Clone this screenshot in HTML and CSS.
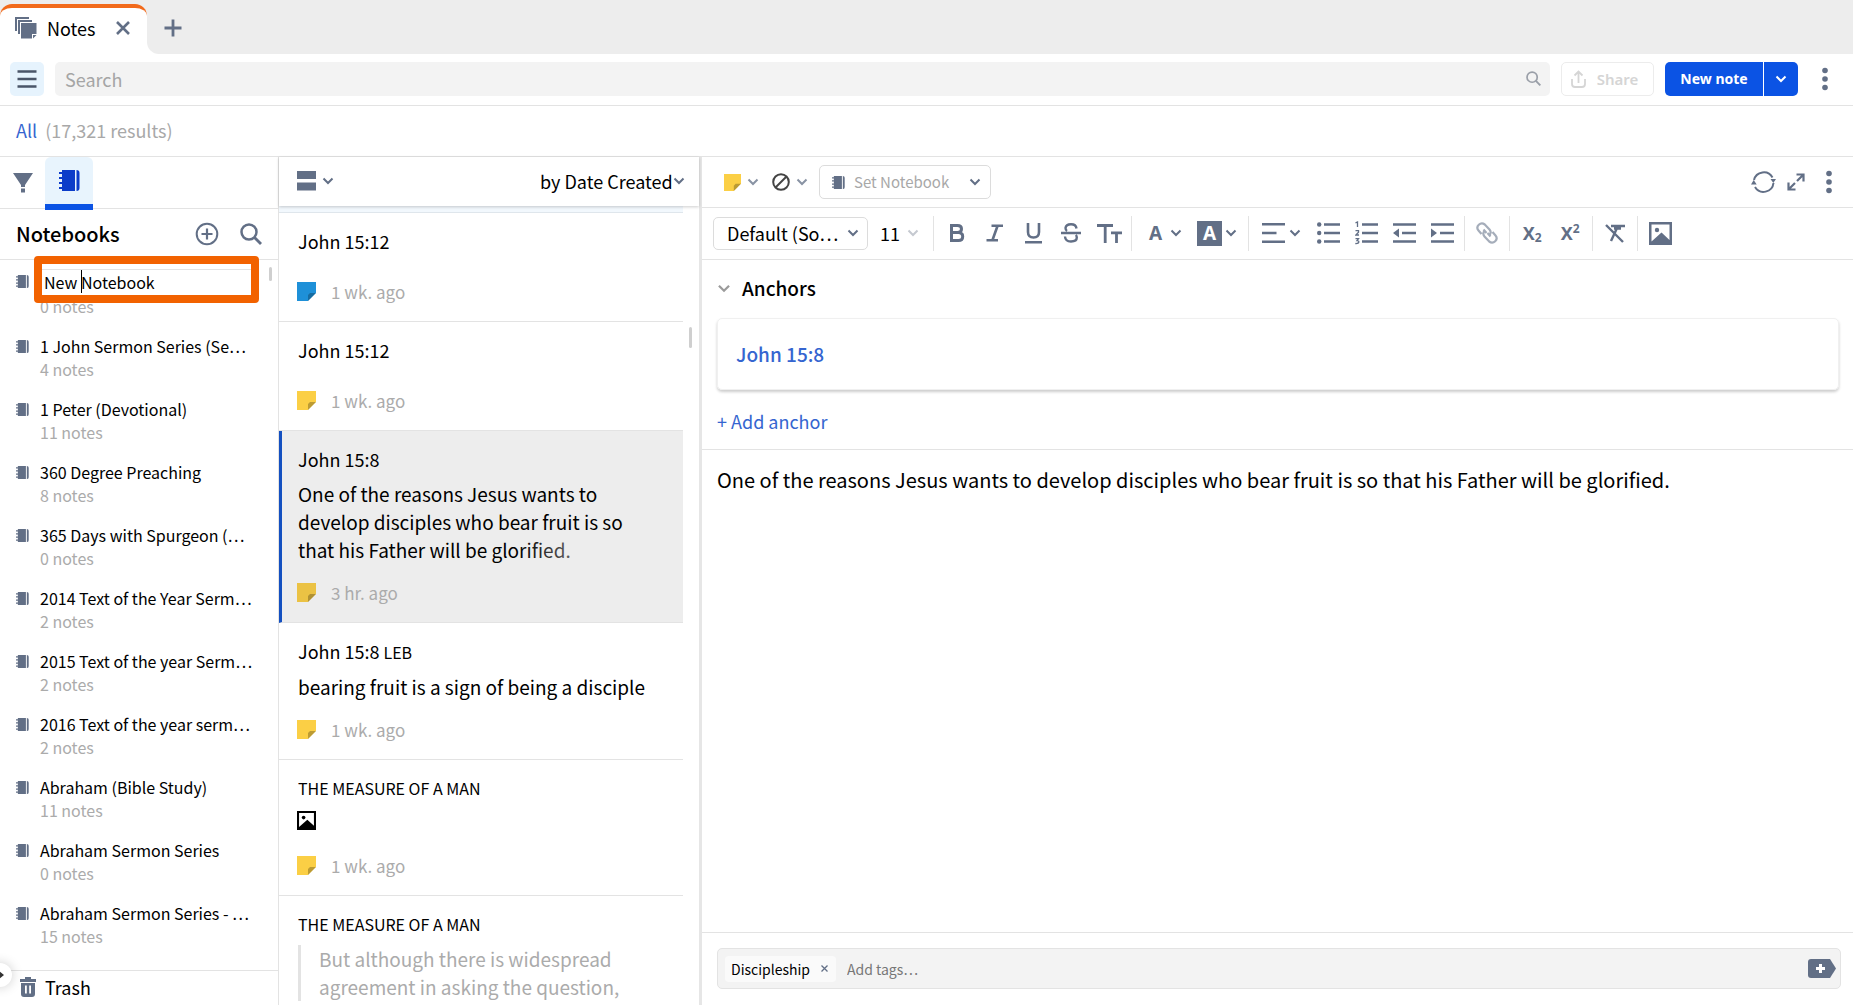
FILE: index.html
```html
<!DOCTYPE html>
<html lang="en">
<head>
    <meta charset="UTF-8">
    <meta name="viewport" content="width=device-width, initial-scale=1.0">
    <title>Notes</title>
    <link rel="stylesheet" href="styles.css">
</head>
<body>

    <!-- Icon set -->
    <svg class="sprite" aria-hidden="true">
        <symbol id="i-chevron" viewBox="0 0 12 8"><path d="M1.5 1.500 6 6l4.500-4.500" fill="none" stroke="currentColor" stroke-width="2"/></symbol>
        <symbol id="i-book" viewBox="0 0 21 23"><path d="M3 1h13v21H3v-2H0v-2h3v-3H0v-2h3v-3H0V8h3V5H0V3h3zM17.500 1q3 0 3 3v15q0 3-3 3z" fill="currentColor"/></symbol>
        <symbol id="i-sticky" viewBox="0 0 19 19"><path d="M0 0h19v11l-8 8H0z" fill="currentColor"/><path d="M11 19v-6l2-2h6z" fill="#000" fill-opacity=".25"/></symbol>
        <symbol id="i-search" viewBox="0 0 22 22"><circle cx="9" cy="9" r="7.500" fill="none" stroke="currentColor" stroke-width="2.500"/><path d="m14.500 14.500 6.500 6.500" stroke="currentColor" stroke-width="2.800"/></symbol>
        <symbol id="i-dots" viewBox="0 0 6 24"><circle cx="3" cy="3.500" r="2.800" fill="currentColor"/><circle cx="3" cy="12" r="2.800" fill="currentColor"/><circle cx="3" cy="20.500" r="2.800" fill="currentColor"/></symbol>
        <symbol id="i-picture" viewBox="0 0 23 23"><path d="M0 0h23v23H0zM2.500 2.500v17l10-9 8 7.500V2.500z" fill="currentColor" fill-rule="evenodd"/><circle cx="8" cy="8" r="2.200" fill="currentColor"/></symbol>
    </svg>

    <div class="tabbar">
        <div class="tab-slot">
            <div class="tab">
                <svg class="tab-icon" width="22" height="22" viewBox="0 0 22 22"><path d="M0 0h14v2H2v12H0zM3 3h14v2H5v12H3zM6 6h15.500v11h-4.500v4.500H6zM18 18h3.500L18 21.500z" fill="currentColor"/></svg>
                <span class="tab-title">Notes</span>
                <button class="tab-close" aria-label="Close tab"><svg width="14" height="14" viewBox="0 0 14 14"><path d="m1 1 12 12M13 1 1 13" stroke="currentColor" stroke-width="2.600"/></svg></button>
            </div>
        </div>
        <div class="tab-rest">
            <button aria-label="New tab"><svg width="18" height="18" viewBox="0 0 18 18"><path d="M9 .5v17M.5 9h17" stroke="currentColor" stroke-width="2.800"/></svg></button>
        </div>
    </div>

    <header class="topbar">
        <button class="menu-btn" aria-label="Menu"><svg width="20" height="18" viewBox="0 0 20 18"><path d="M.5 1.500h19M.5 9h19M.5 16.500h19" stroke="currentColor" stroke-width="2.600"/></svg></button>
        <label class="search">
            <input type="search" placeholder="Search" aria-label="Search">
            <svg width="15" height="15"><use href="#i-search"/></svg>
        </label>
        <button class="share-btn" disabled>
            <svg width="15" height="18" viewBox="0 0 15 18"><path d="M1 9v5q0 3 3 3h7q3 0 3-3V9M7.500 13V2M3.500 5.500l4-4 4 4" fill="none" stroke="currentColor" stroke-width="1.800"/></svg>
            Share
        </button>
        <div class="new-note">
            <button class="new-main">New note</button>
            <button class="new-more" aria-label="More note types"><svg width="12" height="8"><use href="#i-chevron"/></svg></button>
        </div>
        <button class="topbar-more" aria-label="More"><svg width="6" height="24"><use href="#i-dots"/></svg></button>
    </header>

    <div class="crumbs">
        <a href="#">All</a>
        <span>(17,321 results)</span>
    </div>

    <main class="panels">

        <aside class="sidebar">
            <div class="side-tabs">
                <button class="side-tab" aria-label="Filters"><svg width="20" height="20" viewBox="0 0 20 20"><path d="M0 0h20l-8 12v2H8v-2zM8 15.500h4v4H8z" fill="currentColor"/></svg></button>
                <button class="side-tab active" aria-label="Notebooks"><svg width="21" height="23"><use href="#i-book"/></svg></button>
            </div>
            <div class="side-head">
                <h2>Notebooks</h2>
                <button aria-label="Add notebook"><svg width="24" height="24" viewBox="0 0 24 24"><circle cx="12" cy="12" r="10.300" fill="none" stroke="currentColor" stroke-width="2"/><path d="M12 6.500v11M6.500 12h11" stroke="currentColor" stroke-width="2.200"/></svg></button>
                <button aria-label="Find notebook"><svg width="22" height="22"><use href="#i-search"/></svg></button>
            </div>
            <div class="scroll-thumb side-thumb"></div>
            <ul class="notebooks">
                <li class="editing">
                    <svg width="13" height="15"><use href="#i-book"/></svg>
                    <div class="nb-edit">
                        <input type="text" value="New Notebook" aria-label="Notebook name">
                        <i class="caret"></i>
                    </div>
                    <small>0 notes</small>
                </li>
                <li><svg width="13" height="15"><use href="#i-book"/></svg><span>1 John Sermon Series (Se…</span><small>4 notes</small></li>
                <li><svg width="13" height="15"><use href="#i-book"/></svg><span>1 Peter (Devotional)</span><small>11 notes</small></li>
                <li><svg width="13" height="15"><use href="#i-book"/></svg><span>360 Degree Preaching</span><small>8 notes</small></li>
                <li><svg width="13" height="15"><use href="#i-book"/></svg><span>365 Days with Spurgeon (…</span><small>0 notes</small></li>
                <li><svg width="13" height="15"><use href="#i-book"/></svg><span>2014 Text of the Year Serm…</span><small>2 notes</small></li>
                <li><svg width="13" height="15"><use href="#i-book"/></svg><span>2015 Text of the year Serm…</span><small>2 notes</small></li>
                <li><svg width="13" height="15"><use href="#i-book"/></svg><span>2016 Text of the year serm…</span><small>2 notes</small></li>
                <li><svg width="13" height="15"><use href="#i-book"/></svg><span>Abraham (Bible Study)</span><small>11 notes</small></li>
                <li><svg width="13" height="15"><use href="#i-book"/></svg><span>Abraham Sermon Series</span><small>0 notes</small></li>
                <li><svg width="13" height="15"><use href="#i-book"/></svg><span>Abraham Sermon Series - …</span><small>15 notes</small></li>
                <li><svg width="13" height="15"><use href="#i-book"/></svg><span>Advanced Building</span></li>
            </ul>
            <a class="trash" href="#">
                <svg width="16" height="20" viewBox="0 0 16 20"><path d="M0 2h5V0h6v2h5v3H0zM1 6h14v11q0 3-3 3H4q-3 0-3-3zM5 8.500v8h1.800v-8zM9.200 8.500v8H11v-8z" fill="currentColor" fill-rule="evenodd"/></svg>
                Trash
            </a>
            <button class="expander" aria-label="Expand"><svg width="8" height="8" viewBox="0 0 8 8"><path d="M0 3h3V0l5 4-5 4V5H0z" fill="currentColor"/></svg></button>
        </aside>

        <section class="note-list">
            <div class="list-head">
                <button class="layout-btn" aria-label="Layout">
                    <svg width="19" height="20" viewBox="0 0 19 20"><path d="M0 0h19v8H0zM0 11.500h19v8H0z" fill="currentColor"/></svg>
                    <svg width="12" height="8"><use href="#i-chevron"/></svg>
                </button>
                <label class="sort">
                    <select aria-label="Sort"><option>by Date Created</option></select>
                    <svg width="12" height="8"><use href="#i-chevron"/></svg>
                </label>
            </div>
            <div class="scroll-thumb list-thumb"></div>
            <div class="notes">
                <div class="prev-note"></div>
                <article class="note">
                    <h3>John 15:12</h3>
                    <div class="note-body"></div>
                    <footer><svg class="blue" width="19" height="19"><use href="#i-sticky"/></svg>1 wk. ago</footer>
                </article>
                <article class="note">
                    <h3>John 15:12</h3>
                    <div class="note-body"></div>
                    <footer><svg width="19" height="19"><use href="#i-sticky"/></svg>1 wk. ago</footer>
                </article>
                <article class="note selected">
                    <h3>John 15:8</h3>
                    <div class="note-body fade">One of the reasons Jesus wants to develop disciples who bear fruit is so that his Father will be glorified.</div>
                    <footer><svg width="19" height="19"><use href="#i-sticky"/></svg>3 hr. ago</footer>
                </article>
                <article class="note">
                    <h3>John 15:8 <span class="version">LEB</span></h3>
                    <div class="note-body">bearing fruit is a sign of being a disciple</div>
                    <footer><svg width="19" height="19"><use href="#i-sticky"/></svg>1 wk. ago</footer>
                </article>
                <article class="note">
                    <h3 class="book-title">THE MEASURE OF A MAN</h3>
                    <div class="note-body"><svg class="thumb" width="19" height="19"><use href="#i-picture"/></svg></div>
                    <footer><svg width="19" height="19"><use href="#i-sticky"/></svg>1 wk. ago</footer>
                </article>
                <article class="note">
                    <h3 class="book-title">THE MEASURE OF A MAN</h3>
                    <blockquote>But although there is widespread agreement in asking the question,</blockquote>
                </article>
            </div>
        </section>

        <section class="editor">
            <div class="editor-head">
                <button class="drop" aria-label="Note style"><svg class="yellow" width="17" height="17"><use href="#i-sticky"/></svg><svg class="chev" width="12" height="8"><use href="#i-chevron"/></svg></button>
                <button class="drop" aria-label="Highlight"><svg class="none" width="18" height="18" viewBox="0 0 18 18"><circle cx="9" cy="9" r="7.800" fill="none" stroke="currentColor" stroke-width="2"/><path d="M3.500 14.500 14.500 3.500" stroke="currentColor" stroke-width="2"/></svg><svg class="chev" width="12" height="8"><use href="#i-chevron"/></svg></button>
                <label class="set-notebook">
                    <svg width="13" height="15"><use href="#i-book"/></svg>
                    <select aria-label="Notebook"><option>Set Notebook</option></select>
                    <svg width="12" height="8"><use href="#i-chevron"/></svg>
                </label>
                <div class="head-actions">
                    <button aria-label="Sync"><svg width="25" height="24" viewBox="0 0 25 24"><path d="M3 10a10 10 0 0 1 18.500-2.500M22.500 13A10 10 0 0 1 4 17" fill="none" stroke="currentColor" stroke-width="2"/><path d="M19.500 9h5.500l-2.700 4zM0 14.500l2.700-4.500 3 4.500z" fill="currentColor"/></svg></button>
                    <button aria-label="Full screen"><svg width="18" height="18" viewBox="0 0 18 18"><path d="M9.500 1.500h7v7M16 2l-6 6M1.500 9.500v7h7M2 16l6-6" fill="none" stroke="currentColor" stroke-width="2.200"/></svg></button>
                    <button class="head-more" aria-label="More"><svg width="6" height="24"><use href="#i-dots"/></svg></button>
                </div>
            </div>

            <div class="toolbar">
                <label class="font-select">
                    <select aria-label="Font"><option>Default (So…</option></select>
                    <svg width="12" height="8"><use href="#i-chevron"/></svg>
                </label>
                <label class="size-select">
                    <select aria-label="Size"><option>11</option></select>
                    <svg width="12" height="8"><use href="#i-chevron"/></svg>
                </label>
                <div class="tools wide">
                    <button aria-label="Bold"><svg width="16" height="18" viewBox="0 0 16 18"><path d="M2.500 1.500h6q4 0 4 3.500t-4 3.500h-6zM2.500 8.500h7q4.200 0 4.200 4t-4.200 4h-7z" fill="none" stroke="currentColor" stroke-width="3"/></svg></button>
                    <button aria-label="Italic"><svg width="18" height="18" viewBox="0 0 18 18"><path d="M5.500 1.800h11.500M.5 16.200H12M11.500 2l-5 14" fill="none" stroke="currentColor" stroke-width="2.600"/></svg></button>
                    <button aria-label="Underline"><svg width="17" height="21" viewBox="0 0 17 21"><path d="M3 0v9q0 5.500 5.500 5.500T14 9V0M0 19.300h17" fill="none" stroke="currentColor" stroke-width="2.600"/></svg></button>
                    <button aria-label="Strikethrough"><svg width="20" height="20" viewBox="0 0 20 20"><path d="M15.500 5.500Q15 1.300 10 1.300T4.500 5q0 2 1.500 3M0 10h20M4 13.500q.3 5 6 5 5.800 0 5.800-4 0-1.500-1-2.500" fill="none" stroke="currentColor" stroke-width="2.400"/></svg></button>
                    <button aria-label="Text case"><svg width="25" height="19" viewBox="0 0 25 19"><path d="M0 1.500h16M8.200 1v18M14 8.800h11M19.500 8v11" fill="none" stroke="currentColor" stroke-width="2.800"/></svg></button>
                </div>
                <div class="tools color-tools">
                    <button class="letter" aria-label="Text color">A<svg width="12" height="8"><use href="#i-chevron"/></svg></button>
                    <button class="letter" aria-label="Background color"><span>A</span><svg width="12" height="8"><use href="#i-chevron"/></svg></button>
                </div>
                <div class="tools wide">
                    <button class="align" aria-label="Align"><svg width="23" height="20" viewBox="0 0 23 20"><path d="M0 1.300h23M0 10h14.500M0 18.700h23" stroke="currentColor" stroke-width="2.500"/></svg><svg width="12" height="8"><use href="#i-chevron"/></svg></button>
                    <button aria-label="Bulleted list"><svg width="23" height="22" viewBox="0 0 23 22"><path d="M7 2.500h16M7 11h16M7 19.500h16" stroke="currentColor" stroke-width="2.500"/><circle cx="2.200" cy="2.500" r="2.200" fill="currentColor"/><circle cx="2.200" cy="11" r="2.200" fill="currentColor"/><circle cx="2.200" cy="19.500" r="2.200" fill="currentColor"/></svg></button>
                    <button aria-label="Numbered list"><svg width="23" height="24" viewBox="0 0 23 24"><path d="M7 3.500h16M7 12h16M7 20.500h16" stroke="currentColor" stroke-width="2.500"/><path d="M.5 1.800 2.500 1v5M.5 9.700h3v1.500L.8 14h3.200M.5 17.700h3L2 19.700q2 0 1.800 1.500T.3 22.500" fill="none" stroke="currentColor" stroke-width="1.300"/></svg></button>
                    <button aria-label="Outdent"><svg width="23" height="22" viewBox="0 0 23 22"><path d="M0 2.500h23M9 11h14M0 19.500h23" stroke="currentColor" stroke-width="2.500"/><path d="M6 6.500v9L0 11z" fill="currentColor"/></svg></button>
                    <button aria-label="Indent"><svg width="23" height="22" viewBox="0 0 23 22"><path d="M0 2.500h23M9 11h14M0 19.500h23" stroke="currentColor" stroke-width="2.500"/><path d="M0 6.500v9l6-4.500z" fill="currentColor"/></svg></button>
                </div>
                <div class="tools">
                    <button class="muted" aria-label="Link"><svg width="22" height="22" viewBox="0 0 22 22"><g fill="none" stroke="currentColor" stroke-width="2.200"><path d="M5.500 12 2.500 8.500Q0 5.500 2.800 2.800t6-.3L13.500 7.500q2 2.500.5 5M16.500 10l3 3.500q2.500 3-.3 5.700t-6 .3L8.500 14.500q-2-2.500-.5-5M7.500 7.500l3 3.500M11.500 11l3 3.500"/></g></svg></button>
                </div>
                <div class="tools">
                    <button class="script" aria-label="Subscript">X<sub>2</sub></button>
                    <button class="script" aria-label="Superscript">X<sup>2</sup></button>
                </div>
                <div class="tools">
                    <button aria-label="Clear formatting"><svg width="20" height="19" viewBox="0 0 20 19"><path d="M6 2h14M13 2 6 17M1 1l17 17M9 4.500h7" fill="none" stroke="currentColor" stroke-width="2.400"/></svg></button>
                </div>
                <div class="tools">
                    <button aria-label="Insert picture"><svg width="23" height="23"><use href="#i-picture"/></svg></button>
                </div>
            </div>

            <div class="anchors">
                <h2><svg width="14" height="9"><use href="#i-chevron"/></svg>Anchors</h2>
                <div class="anchor-card"><a href="#">John 15:8</a></div>
                <a class="add-anchor" href="#">+ Add anchor</a>
            </div>

            <div class="content" contenteditable="true" spellcheck="false">One of the reasons Jesus wants to develop disciples who bear fruit is so that his Father will be glorified.</div>

            <div class="tags">
                <div class="tag-box">
                    <span class="chip">Discipleship<button aria-label="Remove tag"><svg width="7" height="7" viewBox="0 0 7 7"><path d="m.5.5 6 6M6.500.5l-6 6" stroke="currentColor" stroke-width="1.300"/></svg></button></span>
                    <input type="text" placeholder="Add tags…" aria-label="Add tags">
                    <button class="tag-add" aria-label="Add tag"><svg width="28" height="19" viewBox="0 0 28 19"><path d="M3 0h19l6 9.500-6 9.500H3q-3 0-3-3V3q0-3 3-3z" fill="currentColor"/><path d="M12.500 5v9M8 9.500h9" stroke="#fff" stroke-width="3"/></svg></button>
                </div>
            </div>
        </section>

    </main>

</body>
</html>
```

FILE: styles.css
```css
* {
    box-sizing: border-box;
}

body {
    margin: 0;
    height: 100vh;
    display: flex;
    flex-direction: column;
    overflow: hidden;
    font-family: "Noto Sans CJK KR", "Noto Sans CJK SC", sans-serif;
    font-size: 18px;
    line-height: 24px;
    color: #000;
    background: #fff;
}

h2, h3, ul, blockquote {
    margin: 0;
    padding: 0;
    font-weight: 400;
}

a {
    color: #3565d0;
    text-decoration: none;
}

svg {
    display: block;
    flex: none;
}

.sprite {
    position: absolute;
    width: 0;
    height: 0;
}

button, input, select {
    margin: 0;
    padding: 0;
    border: 0;
    background: none;
    font: inherit;
    color: inherit;
    outline: none;
}

button {
    display: flex;
    align-items: center;
    justify-content: center;
    flex: none;
    color: #626f86;
}

select {
    appearance: none;
}

/* Tab bar */
.tabbar {
    display: flex;
    height: 54px;
    flex: none;
}

.tab-slot {
    width: 147px;
    padding-top: 4px;
    background: #ededed;
}

.tab {
    display: flex;
    align-items: center;
    height: 50px;
    padding: 0 17px 6px 15px;
    border-top: 4px solid #f26a1b;
    border-radius: 12px 12px 0 0;
    background: #fff;
    color: #626f86;
}

.tab-title {
    flex: 1;
    padding-left: 10px;
    color: #000;
}

.tab-rest {
    flex: 1;
    display: flex;
    padding: 2px 17px 0;
    border-radius: 0 0 0 12px;
    background: #ededed;
}

/* Top bar */
.topbar {
    display: flex;
    align-items: center;
    gap: 11px;
    height: 52px;
    flex: none;
    padding: 0 0 2px 10px;
    border-bottom: 1px solid #e3e3e3;
}

.menu-btn {
    width: 34px;
    height: 34px;
    border-radius: 5px;
    background: #e6f3fd;
    color: #4a5568;
}

.search {
    flex: 1;
    display: flex;
    align-items: center;
    height: 34px;
    padding: 0 9px 0 10px;
    border-radius: 5px;
    background: #f3f3f3;
    color: #9a9fa8;
}

.search input {
    flex: 1;
}

.search input::placeholder {
    color: #a5a5a5;
}

.share-btn {
    width: 93px;
    height: 34px;
    gap: 11px;
    padding-right: 6px;
    border: 1px solid #ececec;
    border-radius: 5px;
    color: #d5d5d5;
    font-family: "Noto Sans", sans-serif;
    font-size: 15px;
    font-weight: 600;
}

.new-note {
    display: flex;
    gap: 1px;
}

.new-main, .new-more {
    height: 34px;
    background: #0b53e4;
    color: #fff;
}

.new-main {
    width: 98px;
    border-radius: 5px 0 0 5px;
    font-family: "Noto Sans", sans-serif;
    font-size: 14px;
    font-weight: 700;
}

.new-more {
    width: 34px;
    border-radius: 0 5px 5px 0;
}

.topbar-more {
    width: 55px;
    height: 34px;
    margin-left: -11px;
    padding-right: 2px;
}

.crumbs {
    display: flex;
    align-items: center;
    gap: 8px;
    height: 51px;
    flex: none;
    padding: 0 0 2px 16px;
    border-bottom: 1px solid #e3e3e3;
    color: #a8a8a8;
}

/* Panels */
.panels {
    flex: 1;
    display: flex;
    min-height: 0;
}

.sidebar {
    position: relative;
    display: flex;
    flex-direction: column;
    width: 279px;
    flex: none;
    border-right: 1px solid #e3e3e3;
}

.side-tabs {
    display: flex;
    height: 52px;
    flex: none;
    border-bottom: 1px solid #e3e3e3;
}

.side-tab {
    width: 45px;
}

.side-tab.active {
    width: 48px;
    height: 53px;
    border-bottom: 6px solid #0b53e4;
    border-radius: 6px 6px 0 0;
    background: #e8f4fd;
    color: #0b3cc9;
}

.side-head {
    display: flex;
    align-items: center;
    gap: 21px;
    height: 51px;
    flex: none;
    padding: 0 16px;
    border-bottom: 1px solid #e3e3e3;
}

.side-head h2 {
    flex: 1;
    font-size: 20px;
    font-weight: 500;
}

.scroll-thumb {
    position: absolute;
    width: 3px;
    border-radius: 2px;
    background: #cfcfcf;
}

.side-thumb {
    top: 110px;
    right: 6px;
    height: 14px;
}

.list-thumb {
    top: 170px;
    right: 7px;
    height: 21px;
}

.notebooks {
    flex: 1;
    min-height: 0;
    overflow: hidden;
    list-style: none;
    margin-top: -10px;
    padding: 19px 20px 0 16px;
    font-size: 16px;
}

.notebooks li {
    position: relative;
    display: grid;
    grid-template-columns: 13px 1fr;
    grid-template-rows: 24px 22px;
    column-gap: 11px;
    margin-bottom: 17px;
}

.notebooks li > svg {
    margin-top: 5px;
    color: #626f86;
}

.notebooks span {
    white-space: nowrap;
}

.notebooks small {
    grid-column: 2;
    font-size: 16px;
    line-height: 22px;
    color: #ababab;
}

.notebooks .editing {
    row-gap: 2px;
}

/* Rename box covers part of the row below it */
.nb-edit {
    position: absolute;
    top: -13px;
    left: 18px;
    right: -1px;
    height: 47px;
    padding-top: 5px;
    border: 8px solid #f26200;
    border-radius: 4px;
    background: #fff;
}

.nb-edit input {
    display: block;
    width: 100%;
    height: 25px;
    padding-left: 2px;
    border-top: 1px solid #e3e3e3;
}

.editing small {
    grid-row: 2;
}

.caret {
    position: absolute;
    top: 6px;
    left: 39px;
    width: 1px;
    height: 23px;
    background: #000;
}

.trash {
    display: flex;
    align-items: center;
    gap: 9px;
    height: 35px;
    flex: none;
    padding: 0 0 2px 20px;
    border-top: 1px solid #e3e3e3;
    color: #000;
}

.trash svg {
    color: #626f86;
}

.expander {
    position: absolute;
    bottom: 18px;
    left: -12px;
    width: 24px;
    height: 24px;
    border-radius: 50%;
    background: #fff;
    box-shadow: 0 0 12px rgba(0, 0, 0, .2);
    color: #333;
}

/* Note list */
.note-list {
    position: relative;
    display: flex;
    flex-direction: column;
    width: 423px;
    flex: none;
    border-right: 3px solid #e6e6e6;
}

.list-head {
    display: flex;
    align-items: center;
    justify-content: space-between;
    height: 49px;
    flex: none;
    padding: 0 14px 2px 18px;
    box-shadow: 0 1px 3px rgba(0, 0, 0, .2);
    z-index: 1;
}

.layout-btn {
    gap: 6px;
}

.sort {
    display: flex;
    align-items: center;
    color: #626f86;
}

.sort select {
    color: #000;
}

.notes {
    flex: 1;
    min-height: 0;
    overflow: hidden;
    padding-right: 16px;
}

.prev-note {
    height: 7px;
    border-bottom: 1px solid #dfe6ec;
    background: #f2f8fd;
}

.note {
    padding: 16px 28px 20px 19px;
    border-bottom: 1px solid #e3e3e3;
}

.note.selected {
    padding-left: 16px;
    border-left: 3px solid #1450c0;
    background: #ededed;
}

.note h3 {
    font-size: 18px;
}

.note .version {
    font-size: 16px;
}

.note h3.book-title {
    font-size: 16px;
}

.note-body {
    position: relative;
    min-height: 1px;
    margin: 9px 0 19px;
    font-size: 19px;
    line-height: 28px;
}

.note-body.fade::after {
    content: "";
    position: absolute;
    right: 0;
    bottom: 0;
    width: 138px;
    height: 28px;
    background: linear-gradient(to right, rgba(237, 237, 237, 0), #ededed);
}

.note-body:has(.thumb) {
    height: 28px;
}

.note-body .thumb {
    margin-left: -1px;
    padding-top: 2px;
    height: 21px;
}

.note footer {
    display: flex;
    align-items: center;
    gap: 15px;
    height: 19px;
    font-size: 17px;
    color: #ababab;
}

.note footer svg {
    color: #fbcf45;
    margin-left: -1px;
}

.note footer svg.blue {
    color: #1e90d8;
}

.note.selected footer svg {
    color: #ebc244;
}

.note blockquote {
    margin-top: 9px;
    padding-left: 18px;
    border-left: 3px solid #e3e3e3;
    font-size: 19px;
    line-height: 28px;
    color: #ababab;
}

/* Editor */
.editor {
    flex: 1;
    display: flex;
    flex-direction: column;
    min-width: 0;
}

.editor-head {
    display: flex;
    align-items: center;
    gap: 13px;
    height: 51px;
    flex: none;
    padding: 0 21px 0 22px;
    border-bottom: 1px solid #e3e3e3;
}

.drop {
    gap: 6px;
}

.yellow {
    color: #fbcf45;
}

.none {
    color: #444;
}

.drop .chev {
    color: #8993a4;
}

.set-notebook {
    display: flex;
    align-items: center;
    width: 172px;
    height: 34px;
    margin-left: -2px;
    padding: 0 9px 0 12px;
    border: 1px solid #dcdcdc;
    border-radius: 5px;
    color: #626f86;
}

.set-notebook select {
    flex: 1;
    padding-left: 9px;
    font-size: 15px;
    color: #a8a8a8;
}

.head-actions {
    flex: 1;
    display: flex;
    align-items: center;
    justify-content: flex-end;
    gap: 11px;
}

.head-more {
    margin-left: 10px;
}

.toolbar {
    display: flex;
    align-items: center;
    height: 52px;
    flex: none;
    padding: 0 0 1px 11px;
    border-bottom: 1px solid #e3e3e3;
    color: #626f86;
}

.font-select {
    display: flex;
    align-items: center;
    width: 155px;
    height: 33px;
    padding: 0 8px 0 13px;
    border: 1px solid #dcdcdc;
    border-radius: 5px;
}

.font-select select {
    flex: 1;
    min-width: 0;
    color: #000;
}

.size-select {
    display: flex;
    align-items: center;
    justify-content: space-between;
    width: 65px;
    padding: 0 14px 0 12px;
    color: #c5c9d0;
}

.size-select select {
    color: #000;
}

.tools {
    display: flex;
    align-items: center;
    height: 35px;
    padding: 0 3px;
    border-left: 1px solid #e3e3e3;
}

.tools.wide {
    padding-left: 4px;
}

.tools button {
    width: 38px;
    height: 34px;
}

.tools .muted {
    color: #a5adba;
}

.color-tools {
    gap: 15px;
    padding: 0 11px 0 17px;
}

.tools .letter {
    width: auto;
    gap: 3px;
    font-family: "Noto Sans", sans-serif;
    font-size: 19px;
    font-weight: 700;
}

.tools .letter:first-child {
    gap: 8px;
}

.letter span {
    width: 25px;
    height: 25px;
    line-height: 25px;
    background: #626f86;
    color: #fff;
}

.tools .align {
    width: 56px;
    gap: 4px;
}

.tools .script {
    font-family: "Noto Sans", sans-serif;
    font-size: 18px;
    font-weight: 700;
}

.script sub, .script sup {
    font-size: 12px;
    line-height: 12px;
}

.script sub {
    margin-top: 10px;
}

.script sup {
    margin-bottom: 8px;
}

.anchors {
    flex: none;
    padding: 16px 14px 0 15px;
    border-bottom: 1px solid #e3e3e3;
}

.anchors h2 {
    display: flex;
    align-items: center;
    gap: 11px;
    font-size: 19px;
    font-weight: 500;
}

.anchors h2 svg {
    color: #9b9b9b;
}

.anchor-card {
    margin: 18px 0 19px;
    padding: 23px 18px;
    border: 1px solid #f0f0f0;
    border-radius: 5px;
    box-shadow: 0 2px 3px rgba(0, 0, 0, .2);
    font-size: 19px;
    font-weight: 500;
}

.add-anchor {
    display: block;
    padding-bottom: 16px;
}

.content {
    flex: 1;
    padding: 16px 15px;
    font-size: 20px;
    line-height: 28px;
    outline: none;
}

.tags {
    flex: none;
    padding: 15px 12px 16px 15px;
    border-top: 1px solid #e3e3e3;
}

.tag-box {
    display: flex;
    align-items: center;
    gap: 11px;
    height: 41px;
    padding: 0 4px 0 7px;
    border: 1px solid #e3e3e3;
    border-radius: 5px;
    background: #f3f3f3;
    font-size: 14px;
}

.chip {
    display: flex;
    align-items: center;
    gap: 11px;
    height: 26px;
    padding: 0 8px 0 6px;
    border-radius: 4px;
    background: #fafafa;
}

.tag-box input {
    flex: 1;
}

.tag-box input::placeholder {
    color: #777;
}
```
